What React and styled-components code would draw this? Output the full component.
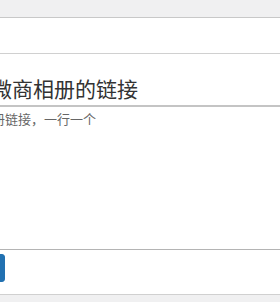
import React from "react";
import styled, { createGlobalStyle } from "styled-components";

const GlobalStyle = createGlobalStyle`
  html, body {
    margin: 0;
    padding: 0;
    background: #f0f0f1;
    font-family: "Liberation Sans", "Noto Sans CJK SC", sans-serif;
  }
`;

function App() {
  return (
    <>
      <GlobalStyle />
      <Page>
        <Panel>
          <TitleField />
          <Heading>微商相册的链接</Heading>
          <Hint>相册链接，一行一个</Hint>
          <LinksArea />
          <Footer>
            <SaveButton>保存更改</SaveButton>
          </Footer>
        </Panel>
      </Page>
    </>
  );
}

export default App;

const Page = styled.div`
  padding-top: 17px;
  height: 302px;
  box-sizing: border-box;
  overflow: hidden;
`;

const Panel = styled.div`
  background: #fff;
  border-top: 1px solid #c8c8c8;
  border-bottom: 1px solid #d0d0d0;
  overflow: hidden;
`;

const TitleField = styled.div`
  height: 35px;
  border-bottom: 1px solid #d0d0d0;
`;

const Heading = styled.h2`
  margin: 0 0 0 -9px;
  padding: 19px 0 2px;
  font-size: 21px;
  line-height: 30px;
  font-weight: 400;
  color: #333;
  white-space: nowrap;
  font-family: "Noto Sans CJK SC", sans-serif;
  border-bottom: 2px solid #c4c4c4;
`;

const Hint = styled.p`
  margin: 3px 0 0 -21px;
  font-size: 13px;
  line-height: 18px;
  color: #666;
  white-space: nowrap;
  font-family: "Noto Sans CJK SC", sans-serif;
`;

const LinksArea = styled.div`
  height: 121px;
  border-bottom: 1px solid #b4b4b4;
`;

const Footer = styled.div`
  height: 44px;
  padding-top: 4px;
  box-sizing: border-box;
`;

const SaveButton = styled.button`
  display: block;
  width: 70px;
  height: 28px;
  margin-left: -65px;
  border: 1px solid #2271b1;
  border-radius: 3px;
  background: #2271b1;
  color: #fff;
  font-size: 13px;
  padding: 0;
`;
